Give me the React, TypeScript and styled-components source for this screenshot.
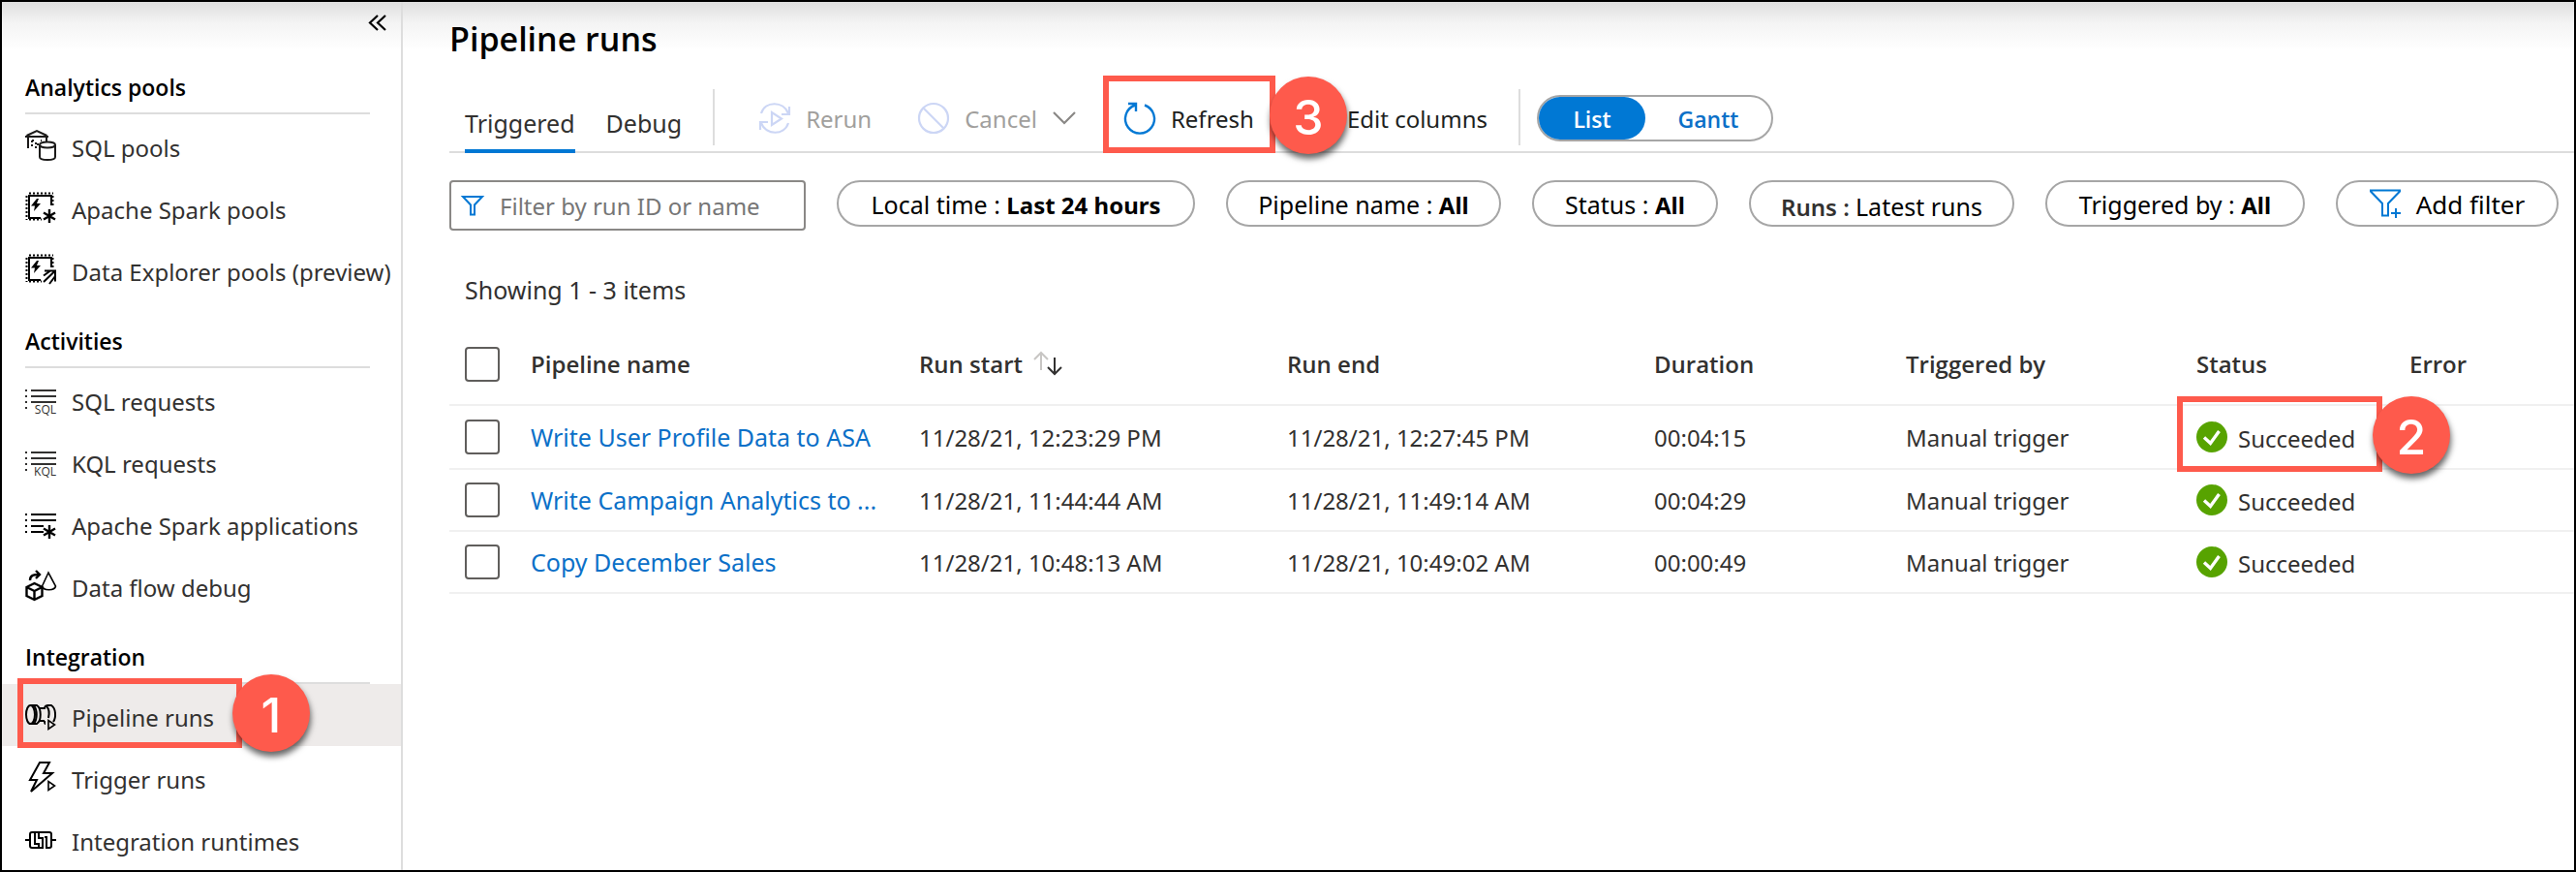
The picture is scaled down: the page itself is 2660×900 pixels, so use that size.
import React from 'react';
import styled, { createGlobalStyle } from 'styled-components';

const GlobalStyle = createGlobalStyle`
  *, *::before, *::after { box-sizing: border-box; }
  body {
    margin: 0;
    background: #fff;
    color: #323130;
    font-family: "Noto Sans", "Open Sans", sans-serif;
    font-size: 24px;
    line-height: 32px;
  }
  button, input { font: inherit; color: inherit; margin: 0; }
  button { background: none; border: 0; padding: 0; cursor: pointer; }
  a { text-decoration: none; }
`;

const Shell = styled.div`
  display: flex;
  min-height: 100vh;
  border: 2px solid #000;
  background: linear-gradient(#dfdfdf, #f4f4f4 22px, #fff 50px);
`;

const Sidebar = styled.nav`
  flex: 0 0 414px;
  border-right: 2px solid #dddddd;
`;

const SidebarTop = styled.div`
  display: flex;
  justify-content: flex-end;
  height: 46px;
  padding: 11px 12px 0 0;
`;

const IconButton = styled.button`
  display: flex;
  width: 24px;
  height: 24px;
`;

const GroupTitle = styled.h2`
  height: 70px;
  margin: 0 32px 0 24px;
  padding-top: 26px;
  border-bottom: 2px solid #dddddd;
  color: #000;
  font-family: "Open Sans", sans-serif;
  font-size: 23px;
  font-weight: 600;
`;

const List = styled.ul`
  margin: 0;
  padding: 0;
  list-style: none;
`;

const Item = styled.li<{ $selected?: boolean }>`
  position: relative;
  background: ${(p) => (p.$selected ? '#eeebea' : 'transparent')};
`;

const ItemLink = styled.a`
  display: flex;
  align-items: center;
  gap: 16px;
  height: 64px;
  padding-left: 24px;
  color: #323130;
  white-space: nowrap;
`;

const ItemLabel = styled.span`
  padding-top: 6px;
`;

const Svg = styled.svg<{ $size?: number }>`
  display: block;
  flex: none;
  width: ${(p) => p.$size ?? 32}px;
  height: ${(p) => p.$size ?? 32}px;
  overflow: visible;
`;

const Outline = styled.span<{ $inset: string }>`
  position: absolute;
  inset: ${(p) => p.$inset};
  border: 6px solid #fe5a4c;
  pointer-events: none;
`;

const Badge = styled.span<{ $top: number; $left: number }>`
  position: absolute;
  z-index: 1;
  top: ${(p) => p.$top}px;
  left: ${(p) => p.$left}px;
  width: 80px;
  height: 80px;
  border-radius: 50%;
  background: #fe5a4c;
  box-shadow: 1px 5px 6px rgba(0, 0, 0, 0.6);
  color: #fff;
  font: 500 50px/84px Inter, sans-serif;
  text-align: center;
  pointer-events: none;
`;

const Main = styled.main`
  flex: 1;
  min-width: 0;
  padding-left: 48px;
`;

const Title = styled.h1`
  margin: 0;
  padding-top: 16px;
  color: #000;
  font-family: "Open Sans", sans-serif;
  font-size: 34px;
  font-weight: 600;
  line-height: 44px;
`;

const Toolbar = styled.div`
  display: flex;
  align-items: flex-end;
  height: 96px;
  padding-left: 16px;
  border-bottom: 2px solid #dddddd;
`;

const TabButton = styled.button<{ $active?: boolean }>`
  height: 52px;
  margin: 0 32px -2px 0;
  padding-bottom: 6px;
  border-bottom: 4px solid ${(p) => (p.$active ? '#0078d4' : 'transparent')};
  font-size: 25px;
`;

const Separator = styled.span<{ $gap?: number }>`
  width: 2px;
  height: 58px;
  margin: 0 0 6px ${(p) => p.$gap ?? 0}px;
  background: #dddddd;
`;

const Command = styled.button<{ $gap: number }>`
  position: relative;
  display: flex;
  align-items: center;
  gap: 16px;
  height: 36px;
  margin: 0 0 16px ${(p) => p.$gap}px;
  color: #201f1e;
  white-space: nowrap;
  &:disabled { color: #a19f9d; }
`;

const CommandText = styled.span`
  padding-top: 2px;
`;

const Toggle = styled.div`
  display: flex;
  height: 48px;
  margin: 0 0 10px 17px;
  border: 2px solid #a6a6a6;
  border-radius: 24px;
`;

const ToggleButton = styled.button<{ $on?: boolean }>`
  width: ${(p) => (p.$on ? 110 : 130)}px;
  padding-top: 2px;
  border-radius: 22px;
  background: ${(p) => (p.$on ? '#0078d4' : 'transparent')};
  color: ${(p) => (p.$on ? '#fff' : '#0b70c8')};
  font-family: "Open Sans", sans-serif;
  font-size: 23px;
  font-weight: 600;
`;

const Filters = styled.div`
  display: flex;
  align-items: flex-start;
  gap: 32px;
  padding-top: 28px;
  color: #000;
`;

const Search = styled.label`
  display: flex;
  align-items: center;
  gap: 16px;
  width: 368px;
  height: 52px;
  padding: 0 8px 0 10px;
  border: 2px solid #8a8886;
  border-radius: 4px;
  background: #fff;
`;

const SearchInput = styled.input`
  flex: 1;
  min-width: 0;
  padding: 2px 0 0;
  border: 0;
  outline: 0;
  background: none;
  &::placeholder { color: #767676; opacity: 1; }
`;

const Pill = styled.button<{ $width: number; $large?: boolean }>`
  display: flex;
  align-items: center;
  justify-content: center;
  gap: 16px;
  width: ${(p) => p.$width}px;
  height: 48px;
  border: 2px solid #a6a6a6;
  border-radius: 24px;
  font-size: ${(p) => (p.$large ? 26 : 25)}px;
  white-space: pre;
  strong { font-size: 24px; font-weight: 700; }
`;

const PillText = styled.span<{ $low?: boolean }>`
  padding-top: ${(p) => (p.$low ? 6 : 2)}px;
`;

const RunsName = styled.span`
  color: #323130;
  font-size: 24px;
  font-weight: 600;
`;

const Summary = styled.p`
  margin: 0;
  padding: 45px 0 0 16px;
  font-size: 25px;
`;

const Table = styled.table`
  width: 100%;
  margin-top: 36px;
  border-collapse: separate;
  border-spacing: 0;
  table-layout: fixed;
`;

const Column = styled.col<{ $width?: number }>`
  width: ${(p) => (p.$width ? `${p.$width}px` : 'auto')};
`;

const HeadCell = styled.th`
  height: 68px;
  padding: 0 0 16px;
  border-bottom: 2px solid #f0f0f0;
  font-family: "Open Sans", sans-serif;
  font-weight: 600;
  text-align: left;
  white-space: nowrap;
`;

const Row = styled.tr`
  height: 64px;
  &:first-child { height: 66px; }
`;

const Cell = styled.td<{ $text?: boolean }>`
  position: relative;
  padding: ${(p) => (p.$text ? 2 : 0)}px 0 0;
  border-bottom: 2px solid #f0f0f0;
  white-space: nowrap;
`;

const Check = styled.input`
  display: block;
  appearance: none;
  width: 36px;
  height: 36px;
  margin-left: 16px;
  border: 2px solid #605e5c;
  border-radius: 4px;
  background: #fff;
`;

const RunLink = styled.a`
  color: #0b70c8;
  font-size: 25px;
`;

const WithIcon = styled.span`
  display: flex;
  align-items: center;
  gap: 11px;
`;

const StatusText = styled.span`
  padding-top: 4px;
`;

const stroke = { fill: 'none', stroke: '#000', strokeWidth: 2 };

const CollapseIcon = () => (
  <Svg $size={24} viewBox="0 0 24 24" fill="none" stroke="#000" strokeWidth="2.2">
    <path d="M12 3 4 10.500l8 7.500M20 3l-8 7.500 8 7.500" />
  </Svg>
);

const SqlPoolIcon = () => (
  <Svg viewBox="0 0 32 32" {...stroke} stroke="#1b1a19">
    <path d="M0 7h24M1.500 6 12 1l10.500 5M3 8v11M22 8v4" />
    <path d="M7 11v8M11 13v6" strokeDasharray="2 2" />
    <path d="M7 11h2M12 15h2M17 11h-1" strokeDasharray="2 2" />
    <path d="M15 15.500v12.500c0 4 16 4 16 0V15.500" />
    <ellipse cx="23" cy="15.500" rx="8" ry="3" />
  </Svg>
);

const Chip = () => (
  <>
    <path d="M27 14V4H4v23h12" />
    <path d="M4 1.500h25M4 28.500h13" strokeDasharray="2 2" />
    <path d="M1.500 4v25M28.500 4v12" strokeDasharray="2 2" />
    <path d="M12 7 6 14.500h4l-1 5.500 7-8h-4l2-5z" fill="#000" stroke="none" />
  </>
);

const SparkPoolIcon = () => (
  <Svg viewBox="0 0 32 32" {...stroke}>
    <Chip />
    <path d="M25 18v14M19 21.500l12 7M31 21.500l-12 7" strokeWidth="2.400" />
  </Svg>
);

const ExplorerPoolIcon = () => (
  <Svg viewBox="0 0 32 32" {...stroke}>
    <Chip />
    <path d="M20 17.500h11v11M31 17.500 19 29M26 17.500l-7 5M31 23l-6 8" />
  </Svg>
);

const Lines = ({ short }: { short?: boolean }) => (
  <>
    <path d={short ? 'M6 7h26M6 13h26M6 19h13M6 25h13' : 'M6 7h26M6 13h26M6 19h26'} />
    <path d="M1 6v20" strokeDasharray="2 4" />
  </>
);

const QueryTag = styled.text`
  font: 12px "Open Sans", sans-serif;
  fill: #323130;
  stroke: none;
`;

const QueryIcon = ({ tag }: { tag: string }) => (
  <Svg viewBox="0 0 32 32" {...stroke} stroke="#323130">
    <Lines />
    <QueryTag x="32" y="31" textAnchor="end">{tag}</QueryTag>
  </Svg>
);

const SparkAppsIcon = () => (
  <Svg viewBox="0 0 32 32" {...stroke}>
    <Lines short />
    <path d="M25 18v14M19 21.500l12 7M31 21.500l-12 7" strokeWidth="2.400" />
  </Svg>
);

const DataFlowIcon = () => (
  <Svg viewBox="0 0 32 32" {...stroke}>
    <path d="M1.500 18 9.500 14l8 4v9l-8 4-8-4zM1.500 18l8 4 8-4M9.500 22v9" strokeWidth="2.400" />
    <path d="M5 11C5 6 8 5 15 5M11 1l4 4-4 4" strokeWidth="2.400" />
    <path d="M24 3 17.500 17c1 5 13 5 14 0z" strokeWidth="1.600" />
  </Svg>
);

const PipelineIcon = () => (
  <Svg viewBox="0 0 32 32" {...stroke}>
    <ellipse cx="5.500" cy="15.500" rx="4.500" ry="9.500" />
    <path d="M5.500 6H12c5 3 5 16 0 19H5.500M9.500 7c3 4 3 13 0 17M15 9h6M15 22h5" />
    <path d="M21 25c-1 0-1-1-1-3M20 8c1-2 2-2 3-2h4c5 3 5 13 2 17M22 7c3 3 3 8 2 12" />
    <path d="M24 21.500v9l6.500-4.500z" strokeWidth="1.600" />
  </Svg>
);

const TriggerIcon = () => (
  <Svg viewBox="0 0 32 32" {...stroke}>
    <path d="M15 1h10l-6 11h9L6 31l6-12H5z" />
    <path d="M22 19h8v12h-8z" fill="#fff" stroke="none" />
    <path d="M24 20.500v9l6.500-4.500z" strokeWidth="1.600" />
  </Svg>
);

const RuntimeIcon = () => (
  <Svg viewBox="0 0 32 32" {...stroke}>
    <path d="M0 17h5M27 17h5" />
    <path d="M13 9H7q-2 0-2 2v12q0 2 2 2h11V15h-4V9h11q2 0 2 2v12q0 2-2 2h-3V14h-2M10 9v12h4v4" />
  </Svg>
);

const RerunIcon = () => (
  <Svg viewBox="0 0 32 32" fill="none" stroke="#ccd6f5" strokeWidth="2.200">
    <path d="M2 11C6-2 25-2 30 11M31 4v8h-8M30 21C26 34 7 34 2 21M1 28v-8h8" />
    <path d="M13 10v13l10-6.500z" />
  </Svg>
);

const CancelIcon = () => (
  <Svg viewBox="0 0 32 32" fill="none" stroke="#ccd6f5" strokeWidth="2.200">
    <circle cx="16" cy="16" r="15" />
    <path d="M5.500 5.500l21 21" />
  </Svg>
);

const ChevronIcon = () => (
  <Svg $size={24} viewBox="0 0 24 24" fill="none" stroke="#8a8886" strokeWidth="2.200">
    <path d="M1 6l11 11L23 6" />
  </Svg>
);

const RefreshIcon = () => (
  <Svg viewBox="0 0 32 32" fill="none" stroke="#0078d4" strokeWidth="2.400">
    <path d="M21 2.500A15 15 0 1 1 11 2.500M4 1h8v8" />
  </Svg>
);

const FunnelIcon = () => (
  <Svg $size={24} viewBox="0 0 24 24" fill="none" stroke="#0078d4" strokeWidth="2">
    <path d="M2 3h20l-8 8.500v10h-4v-10z" />
  </Svg>
);

const FunnelPlusIcon = () => (
  <Svg viewBox="0 0 32 32" fill="none" stroke="#0078d4" strokeWidth="2">
    <path d="M1 2.500h30v1L19 16v12.500h-6V16L1 3.500z" />
    <path d="M27 21v10M22 26h10" />
  </Svg>
);

const SortIcon = () => (
  <Svg viewBox="0 0 32 32" fill="none" strokeWidth="2">
    <path d="M8 22V4M1 11l7-7 7 7" stroke="#c8c6c4" />
    <path d="M22 9v17M15 19l7 7 7-7" stroke="#323130" />
  </Svg>
);

const SuccessIcon = () => (
  <Svg viewBox="0 0 32 32">
    <circle cx="16" cy="16" r="16" fill="#57a300" />
    <path d="M8 16.500l6.500 6L23.500 10" fill="none" stroke="#fff" strokeWidth="3.400" />
  </Svg>
);

type NavEntry = { label: string; icon: React.ReactNode; selected?: boolean };

const groups: { title: string; items: NavEntry[] }[] = [
  {
    title: 'Analytics pools',
    items: [
      { label: 'SQL pools', icon: <SqlPoolIcon /> },
      { label: 'Apache Spark pools', icon: <SparkPoolIcon /> },
      { label: 'Data Explorer pools (preview)', icon: <ExplorerPoolIcon /> },
    ],
  },
  {
    title: 'Activities',
    items: [
      { label: 'SQL requests', icon: <QueryIcon tag="SQL" /> },
      { label: 'KQL requests', icon: <QueryIcon tag="KQL" /> },
      { label: 'Apache Spark applications', icon: <SparkAppsIcon /> },
      { label: 'Data flow debug', icon: <DataFlowIcon /> },
    ],
  },
  {
    title: 'Integration',
    items: [
      { label: 'Pipeline runs', icon: <PipelineIcon />, selected: true },
      { label: 'Trigger runs', icon: <TriggerIcon /> },
      { label: 'Integration runtimes', icon: <RuntimeIcon /> },
    ],
  },
];

const runs = [
  { name: 'Write User Profile Data to ASA', start: '11/28/21, 12:23:29 PM', end: '11/28/21, 12:27:45 PM', duration: '00:04:15', marked: true },
  { name: 'Write Campaign Analytics to ...', start: '11/28/21, 11:44:44 AM', end: '11/28/21, 11:49:14 AM', duration: '00:04:29' },
  { name: 'Copy December Sales', start: '11/28/21, 10:48:13 AM', end: '11/28/21, 10:49:02 AM', duration: '00:00:49' },
];

export default function App() {
  return (
    <Shell>
      <GlobalStyle />
      <Sidebar aria-label="Monitor">
        <SidebarTop>
          <IconButton aria-label="Collapse"><CollapseIcon /></IconButton>
        </SidebarTop>
        {groups.map((group) => (
          <section key={group.title}>
            <GroupTitle>{group.title}</GroupTitle>
            <List>
              {group.items.map((item) => (
                <Item key={item.label} $selected={item.selected}>
                  <ItemLink href="#">
                    {item.icon}
                    <ItemLabel>{item.label}</ItemLabel>
                  </ItemLink>
                  {item.selected && (
                    <>
                      <Outline $inset="-6px 164px -2px 16px" />
                      <Badge $top={-10} $left={238}>1</Badge>
                    </>
                  )}
                </Item>
              ))}
            </List>
          </section>
        ))}
      </Sidebar>

      <Main>
        <Title>Pipeline runs</Title>
        <Toolbar>
          <TabButton $active>Triggered</TabButton>
          <TabButton>Debug</TabButton>
          <Separator />
          <Command $gap={46} disabled><RerunIcon /><CommandText>Rerun</CommandText></Command>
          <Command $gap={48} disabled>
            <CancelIcon /><CommandText>Cancel</CommandText><ChevronIcon />
          </Command>
          <Command $gap={50}>
            <RefreshIcon /><CommandText>Refresh</CommandText>
            <Outline $inset="-26px -22px -18px -22px" />
            <Badge $top={-25} $left={150}>3</Badge>
          </Command>
          <Command $gap={96}><CommandText>Edit columns</CommandText></Command>
          <Separator $gap={32} />
          <Toggle role="group" aria-label="View">
            <ToggleButton $on aria-pressed="true">List</ToggleButton>
            <ToggleButton aria-pressed="false">Gantt</ToggleButton>
          </Toggle>
        </Toolbar>

        <Filters>
          <Search>
            <FunnelIcon />
            <SearchInput aria-label="Filter by run ID or name" placeholder="Filter by run ID or name" />
          </Search>
          <Pill $width={370}><PillText>Local time : <strong>Last 24 hours</strong></PillText></Pill>
          <Pill $width={284}><PillText>Pipeline name : <strong>All</strong></PillText></Pill>
          <Pill $width={192}><PillText>Status : <strong>All</strong></PillText></Pill>
          <Pill $width={274}><PillText $low><RunsName>Runs : </RunsName>Latest runs</PillText></Pill>
          <Pill $width={268}><PillText>Triggered by : <strong>All</strong></PillText></Pill>
          <Pill $width={230} $large><FunnelPlusIcon /><PillText>Add filter</PillText></Pill>
        </Filters>

        <Summary>Showing 1 - 3 items</Summary>

        <Table>
          <colgroup>
            <Column $width={84} />
            <Column $width={401} />
            <Column $width={380} />
            <Column $width={379} />
            <Column $width={260} />
            <Column $width={300} />
            <Column $width={220} />
            <Column />
          </colgroup>
          <thead>
            <tr>
              <HeadCell><Check type="checkbox" aria-label="Select all runs" /></HeadCell>
              <HeadCell>Pipeline name</HeadCell>
              <HeadCell><WithIcon>Run start<SortIcon /></WithIcon></HeadCell>
              <HeadCell>Run end</HeadCell>
              <HeadCell>Duration</HeadCell>
              <HeadCell>Triggered by</HeadCell>
              <HeadCell>Status</HeadCell>
              <HeadCell>Error</HeadCell>
            </tr>
          </thead>
          <tbody>
            {runs.map((run) => (
              <Row key={run.name}>
                <Cell><Check type="checkbox" aria-label={`Select ${run.name}`} /></Cell>
                <Cell><RunLink href="#">{run.name}</RunLink></Cell>
                <Cell $text>{run.start}</Cell>
                <Cell $text>{run.end}</Cell>
                <Cell $text>{run.duration}</Cell>
                <Cell $text>Manual trigger</Cell>
                <Cell>
                  <WithIcon><SuccessIcon /><StatusText>Succeeded</StatusText></WithIcon>
                  {run.marked && (
                    <>
                      <Outline $inset="-10px 28px -4px -20px" />
                      <Badge $top={-10} $left={182}>2</Badge>
                    </>
                  )}
                </Cell>
                <Cell />
              </Row>
            ))}
          </tbody>
        </Table>
      </Main>
    </Shell>
  );
}
